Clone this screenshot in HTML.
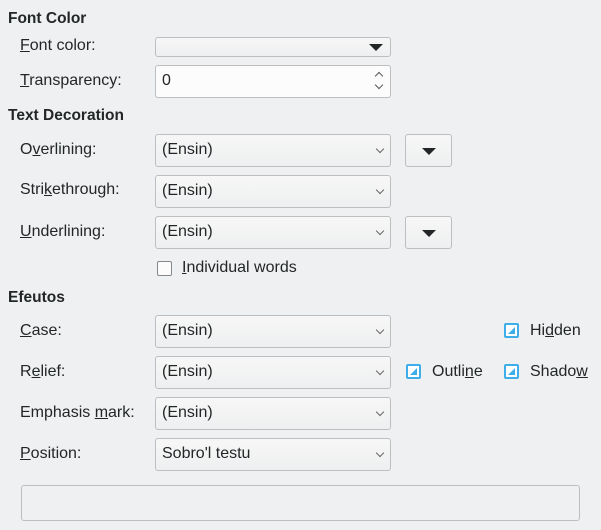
<!DOCTYPE html>
<html><head><style>
body{margin:0;width:601px;height:530px;background:#eff0f1;font-family:"Liberation Sans","Noto Sans CJK JP",sans-serif;font-size:16px;color:#232627;position:relative;overflow:hidden}
.a{position:absolute;white-space:nowrap}
.h{font-weight:bold;font-size:15.5px}
.f{position:absolute;box-sizing:border-box;border:1px solid #bcbebf;border-radius:3px;background:linear-gradient(#f7f7f7,#eeeff0)}
.f span{position:absolute;left:6px;top:6px}
.chev{position:absolute;right:7px;top:11px;width:5px;height:5px;border-right:1px solid #666;border-bottom:1px solid #666;transform:rotate(45deg)}
.tri{position:absolute;width:0;height:0;border-left:7px solid transparent;border-right:7px solid transparent;border-top:7px solid #232627}
.cb{position:absolute;width:15px;height:15px;box-sizing:border-box;border:2px solid #3daee9;border-radius:2px;background:#fff}
.cb:after{content:"";position:absolute;right:2px;bottom:2px;width:0;height:0;border-left:7px solid transparent;border-bottom:7px solid #3daee9}
u{text-decoration:underline}
</style></head><body>
<div class="a h" style="left:8px;top:10px">Font Color</div>
<div class="a" style="left:20px;top:37px"><u>F</u>ont color:</div>
<div class="f" style="left:155px;top:37px;width:236px;height:20px"><div class="tri" style="right:7px;top:6px"></div></div>
<div class="a" style="left:20px;top:72px"><u>T</u>ransparency:</div>
<div class="f" style="left:155px;top:65px;width:236px;height:33px;background:#fcfcfc"><span style="top:6px">0</span>
<div style="position:absolute;right:8px;top:7px;width:5px;height:5px;border-left:1px solid #555;border-top:1px solid #555;transform:rotate(45deg)"></div>
<div style="position:absolute;right:8px;top:16px;width:5px;height:5px;border-right:1px solid #555;border-bottom:1px solid #555;transform:rotate(45deg)"></div></div>
<div class="a h" style="left:8px;top:107px">Text Decoration</div>

<div class="a" style="left:20px;top:141px">O<u>v</u>erlining:</div>
<div class="f" style="left:155px;top:134px;width:236px;height:33px"><span style="top:6px">(Ensin)</span><div class="chev"></div></div>
<div class="f" style="left:405px;top:134px;width:47px;height:33px"><div class="tri" style="left:16px;top:13px"></div></div>

<div class="a" style="left:20px;top:181px">Stri<u>k</u>ethrough:</div>
<div class="f" style="left:155px;top:175px;width:236px;height:33px"><span style="top:6px">(Ensin)</span><div class="chev"></div></div>

<div class="a" style="left:20px;top:223px"><u>U</u>nderlining:</div>
<div class="f" style="left:155px;top:216px;width:236px;height:33px"><span style="top:6px">(Ensin)</span><div class="chev"></div></div>
<div class="f" style="left:405px;top:216px;width:47px;height:33px"><div class="tri" style="left:16px;top:13px"></div></div>

<div style="position:absolute;left:157px;top:261px;width:15px;height:15px;box-sizing:border-box;border:1px solid #888;border-radius:2px;background:#fcfcfc"></div>
<div class="a" style="left:182px;top:259px"><u>I</u>ndividual words</div>

<div class="a h" style="left:8px;top:289px">Efeutos</div>

<div class="a" style="left:20px;top:322px"><u>C</u>ase:</div>
<div class="f" style="left:155px;top:315px;width:236px;height:33px"><span style="top:6px">(Ensin)</span><div class="chev"></div></div>
<div class="cb" style="left:504px;top:323px"></div>
<div class="a" style="left:530px;top:322px">Hi<u>d</u>den</div>

<div class="a" style="left:20px;top:363px">R<u>e</u>lief:</div>
<div class="f" style="left:155px;top:356px;width:236px;height:33px"><span style="top:6px">(Ensin)</span><div class="chev"></div></div>
<div class="cb" style="left:406px;top:364px"></div>
<div class="a" style="left:432px;top:363px">Outli<u>n</u>e</div>
<div class="cb" style="left:504px;top:364px"></div>
<div class="a" style="left:530px;top:363px">Shado<u>w</u></div>

<div class="a" style="left:20px;top:404px">Emphasis <u>m</u>ark:</div>
<div class="f" style="left:155px;top:397px;width:236px;height:33px"><span style="top:6px">(Ensin)</span><div class="chev"></div></div>

<div class="a" style="left:20px;top:445px"><u>P</u>osition:</div>
<div class="f" style="left:155px;top:438px;width:236px;height:33px"><span style="top:6px">Sobro'l testu</span><div class="chev"></div></div>

<div style="position:absolute;left:21px;top:485px;width:559px;height:36px;box-sizing:border-box;border:1px solid #bcbebf;border-radius:3px;background:#eff0f1"></div>
</body></html>
